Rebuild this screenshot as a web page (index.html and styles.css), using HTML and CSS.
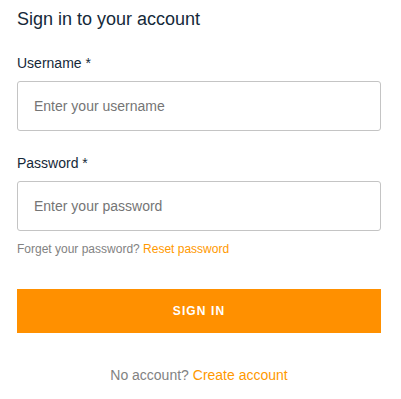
FILE: index.html
```html
<!DOCTYPE html>
<html lang="en">
<head>
<meta charset="utf-8">
<title>Sign in</title>
<link rel="stylesheet" href="styles.css">
</head>
<body>
<form class="signin">
  <h1 class="title">Sign in to your account</h1>
  <div class="field">
    <label class="label" for="username">Username *</label>
    <input class="input" id="username" type="text" placeholder="Enter your username">
  </div>
  <div class="field">
    <label class="label" for="password">Password *</label>
    <input class="input" id="password" type="password" placeholder="Enter your password">
  </div>
  <p class="hint">Forget your password? <a class="link" href="#">Reset password</a></p>
  <button class="button" type="button">Sign in</button>
  <p class="footer">No account? <a class="link" href="#">Create account</a></p>
</form>
</body>
</html>
```
FILE: styles.css
```css
html, body {
  margin: 0;
  padding: 0;
  background: #ffffff;
}

body {
  font-family: "Liberation Sans", Arial, sans-serif;
  color: #152939;
}

.signin {
  width: 364px;
  margin-left: 17px;
  padding-top: 7px;
  display: flex;
  flex-direction: column;
}

.title {
  margin: 0;
  font-size: 18px;
  line-height: 24px;
  font-weight: 400;
  color: #152939;
}

.field {
  display: flex;
  flex-direction: column;
  margin-top: 24px;
}

.label {
  font-size: 14px;
  line-height: 16px;
  color: #152939;
  margin-bottom: 10px;
}

.input {
  box-sizing: border-box;
  width: 100%;
  height: 50px;
  margin: 0;
  padding: 0 16px;
  border: 1px solid #c4c4c4;
  border-radius: 3px;
  font-family: "Liberation Sans", Arial, sans-serif;
  font-size: 14px;
  color: #152939;
  background: #ffffff;
  outline: none;
}

.input::placeholder {
  color: #757575;
  opacity: 1;
}

.hint {
  margin: 11px 0 0;
  font-size: 12px;
  line-height: 14px;
  color: #828282;
}

.link {
  color: #ff9900;
  text-decoration: none;
}

.button {
  box-sizing: border-box;
  width: 100%;
  height: 44px;
  margin-top: 33px;
  padding: 0;
  border: none;
  background: #ff9000;
  color: #ffffff;
  font-family: "Liberation Sans", Arial, sans-serif;
  font-size: 12px;
  font-weight: 700;
  letter-spacing: 1.1px;
  text-transform: uppercase;
  display: flex;
  align-items: center;
  justify-content: center;
}

.footer {
  margin: 34px 0 0;
  font-size: 14px;
  line-height: 16px;
  text-align: center;
  color: #828282;
}
```
